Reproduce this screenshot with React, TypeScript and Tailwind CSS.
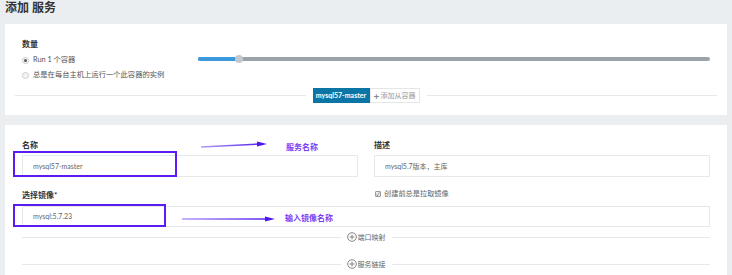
import React from "react";

const FONT = { fontFamily: "Lato, 'Noto Sans CJK SC', sans-serif" };

function Radio({ checked }: { checked?: boolean }) {
  return (
    <span className="flex h-[7px] w-[7px] items-center justify-center rounded-full border border-[#c9cdd1] bg-[#f3f4f5]">
      {checked && <span className="h-[3px] w-[3px] rounded-full bg-[#555]" />}
    </span>
  );
}

function PlusCircle() {
  return (
    <svg width="10" height="10" viewBox="0 0 10 10" className="shrink-0">
      <circle cx="5" cy="5" r="4.3" fill="none" stroke="#777" strokeWidth="0.9" />
      <path d="M5 2.6v4.8M2.6 5h4.8" stroke="#777" strokeWidth="0.9" />
    </svg>
  );
}

function SectionDivider({ label }: { label: string }) {
  return (
    <div className="flex h-[12px] items-center">
      <div className="h-px flex-1 bg-[#e6e8ea]" />
      <div className="mx-[6px] flex items-center gap-[1px] text-[7px] text-[#666]">
        <PlusCircle />
        <span>{label}</span>
      </div>
      <div className="h-px flex-1 bg-[#e6e8ea]" />
    </div>
  );
}

function Arrow({ width, y1, y2 }: { width: number; y1: number; y2: number }) {
  const id = `g${width}`;
  return (
    <svg width={width} height="10" viewBox={`0 0 ${width} 10`}>
      <defs>
        <linearGradient id={id} gradientUnits="userSpaceOnUse" x1="0" x2={width} y1="0" y2="0">
          <stop offset="0" stopColor="#b59af8" />
          <stop offset="1" stopColor="#4b17f0" />
        </linearGradient>
      </defs>
      <path d={`M0 ${y1} L${width - 8} ${y2}`} stroke={`url(#${id})`} strokeWidth="1.5" />
      <path d={`M${width - 10} ${y2 - 2.6} L${width} ${y2} L${width - 10} ${y2 + 2.6} Z`} fill="#4b17f0" />
    </svg>
  );
}

export default function App() {
  return (
    <div className="relative h-[275px] w-[732px] overflow-hidden bg-[#ebeef0]" style={FONT}>
      <div className="h-[24px] px-[5px] text-[12px] font-bold leading-[16px] text-[#333]">添加 服务</div>

      {/* 数量 */}
      <div className="mx-[5px] h-[91px] bg-white pt-[14px]">
        <div className="flex px-[17px]">
          <div className="w-[176px]">
            <div className="h-[12px] text-[8px] font-bold leading-[12px] text-[#333]">数量</div>
            <div className="mt-[5px] flex h-[10px] items-center gap-[4px] text-[7.3px] text-[#555]">
              <Radio checked />
              <span>Run 1 个容器</span>
            </div>
            <div className="mt-[5px] flex h-[10px] items-center gap-[4px] text-[7.3px] text-[#555]">
              <Radio />
              <span>总是在每台主机上运行一个此容器的实例</span>
            </div>
          </div>
          <div className="relative mt-[19px] h-[4px] flex-1 rounded-full bg-[#9ba2a8]">
            <div className="h-[4px] w-[41px] rounded-l-full bg-[#3b99dc]" />
            <div className="absolute left-[37px] top-[-2px] h-[8px] w-[8px] rounded-full bg-[#c3c8cc]" />
          </div>
        </div>
        <div className="mx-[10px] mt-[8px] flex h-[15px] items-center">
          <div className="h-px flex-1 bg-[#e6e8ea]" />
          <div className="mx-[7px] flex h-[15px]">
            <div className="flex w-[57px] items-center justify-center bg-[#0b76a6] text-[7px] font-bold text-white">
              mysql57-master
            </div>
            <div className="flex w-[50px] items-center justify-center gap-[1px] border border-[#e4e6e8] text-[7px] text-[#999]">
              <span className="text-[10px] font-bold leading-none text-[#888]">+</span>
              <span>添加从容器</span>
            </div>
          </div>
          <div className="h-px flex-1 bg-[#e6e8ea]" />
        </div>
      </div>

      {/* 名称 / 描述 */}
      <div className="mx-[5px] mt-[10px] h-[160px] bg-white px-[17px] pt-[14px]">
        <div className="grid grid-cols-2 gap-x-[16px]">
          <div>
            <div className="h-[12px] text-[8px] font-bold leading-[12px] text-[#333]">名称</div>
            <div className="mt-[4px] flex h-[22px] items-center border border-[#e6e8ea] px-[10px] text-[7px] text-[#666]">
              mysql57-master
            </div>
          </div>
          <div>
            <div className="h-[12px] text-[8px] font-bold leading-[12px] text-[#333]">描述</div>
            <div className="mt-[4px] flex h-[22px] items-center border border-[#e6e8ea] px-[10px] text-[7px] text-[#666]">
              mysql5.7版本，主库
            </div>
          </div>
          <div className="mt-[12px] h-[12px] text-[8px] font-bold leading-[12px] text-[#333]">选择镜像*</div>
          <div className="mt-[11px] flex h-[12px] items-center gap-[3px] pl-[1px] text-[7.2px] text-[#666]">
            <span className="flex h-[6px] w-[6px] items-center justify-center rounded-[1px] border border-[#999] bg-[#eee] text-[5px] leading-none text-[#333]">
              ✓
            </span>
            <span>创建前总是拉取镜像</span>
          </div>
        </div>
        <div className="mt-[5px] flex h-[21px] items-center border border-[#e6e8ea] px-[10px] text-[7px] text-[#666]">
          mysql:5.7.23
        </div>
        <div className="mt-[4px]">
          <SectionDivider label="端口映射" />
        </div>
        <div className="mt-[15px]">
          <SectionDivider label="服务链接" />
        </div>
      </div>

      {/* annotations */}
      <div className="absolute left-[13px] top-[151px] h-[26px] w-[164px] border-[2px] border-[#5a1cf0]" />
      <div className="absolute left-[13px] top-[204px] h-[23px] w-[153px] border-[2px] border-[#5a1cf0]" />
      <div className="absolute left-[201px] top-[140px]">
        <Arrow width={66} y1={7} y2={4} />
      </div>
      <div className="absolute left-[286px] top-[141px] text-[8px] font-bold leading-[12px] text-[#7a3ef5]">服务名称</div>
      <div className="absolute left-[182px] top-[214px]">
        <Arrow width={93} y1={5} y2={5} />
      </div>
      <div className="absolute left-[285px] top-[212px] text-[8px] font-bold leading-[12px] text-[#7a3ef5]">输入镜像名称</div>
    </div>
  );
}
